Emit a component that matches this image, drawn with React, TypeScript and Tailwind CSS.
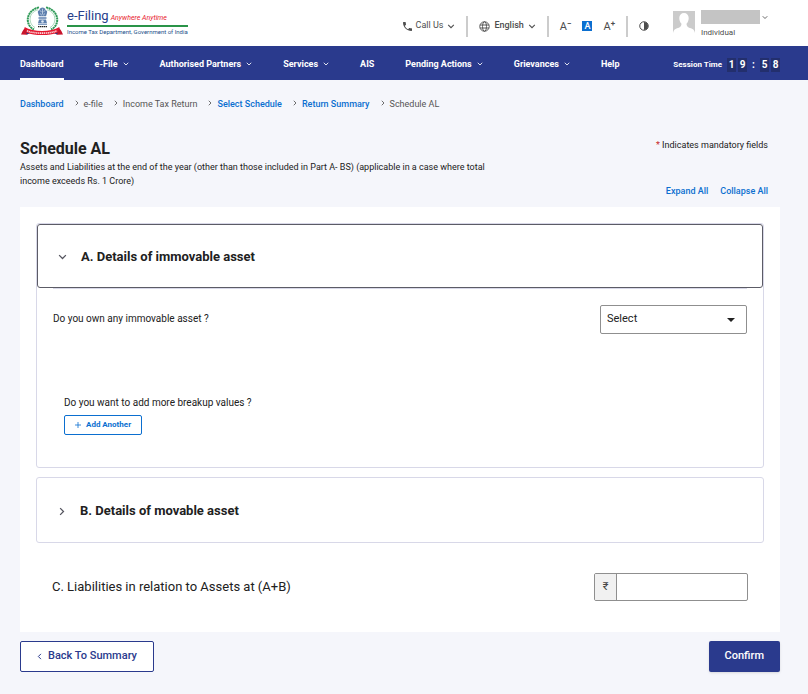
import { useState } from "react";
import type { ReactNode } from "react";

const navItems = [
    { label: "Dashboard", active: true },
    { label: "e-File", menu: true },
    { label: "Authorised Partners", menu: true },
    { label: "Services", menu: true },
    { label: "AIS" },
    { label: "Pending Actions", menu: true },
    { label: "Grievances", menu: true },
    { label: "Help" },
];

const crumbs = [
    { label: "Dashboard", link: true },
    { label: "e-file" },
    { label: "Income Tax Return" },
    { label: "Select Schedule", link: true },
    { label: "Return Summary", link: true },
    { label: "Schedule AL" },
];

const session = ["1", "9", ":", "5", "8"];

function ChevronDown({ className = "" }: { className?: string }) {
    return (
        <svg viewBox="0 0 12 8" fill="none" className={className}>
            <path d="M1.5 1.5L6 6l4.5-4.5" stroke="currentColor" strokeWidth="1.700" />
        </svg>
    );
}

function ChevronRight({ className = "" }: { className?: string }) {
    return (
        <svg viewBox="0 0 8 12" fill="none" className={className}>
            <path d="M1.5 1.5L6 6l-4.5 4.5" stroke="currentColor" strokeWidth="1.700" />
        </svg>
    );
}

function Emblem() {
    return (
        <svg viewBox="0 0 42 32" preserveAspectRatio="none" className="mt-[2px] h-[30px] w-[42px]" fill="none">
            {/* Laurel */}
            <path d="M18 1.500C4 5 4 21 13 25" stroke="#2f9a57" strokeWidth="2" strokeDasharray="2.200 .5" />
            <path d="M25 1.500c14 3.500 14 19.500 5 23.500" stroke="#2f9a57" strokeWidth="2" strokeDasharray="2.200 .5" />
            <path d="M17 4C7 7 7 19 14 23M26 4c10 3 10 15 3 19" stroke="#8cc9a0" strokeWidth=".8" />
            {/* Lion capital */}
            <path d="M18.500 4.500c0-2 1.500-3 3-3s3 1 3 3c1.600.3 2 1.500 1.500 3l-1 3.500h-7l-1-3.500c-.5-1.500 0-2.700 1.500-3z" fill="#5d7fae" />
            <path d="M19 5l1.500 1M24 5l-1.500 1M21.500 3v6M19.500 8l1 2M23.500 8l-1 2" stroke="#e3ebf5" strokeWidth=".7" />
            <path d="M17.500 12h8v1.500h-8zM18 14.500h7l1 4h-9z" fill="#5d7fae" />
            <circle cx="21.500" cy="16.500" r="1.300" fill="#dfe8f3" />
            <path d="M17 19.500h9" stroke="#5d7fae" strokeWidth="1" />
            <path d="M17 22h9" stroke="#222" strokeWidth="1.300" strokeDasharray="1.400 .5" />
            {/* Ribbon */}
            <path d="M4 23l-2.500 4L0 30.500l6 .2 2-3zM38 23l2.500 4 1.500 3.500-6 .2-2-3z" fill="#c9142c" />
            <path d="M5 27.500l4 1.500-3 1.500zM37 27.500l-4 1.500 3 1.500z" fill="#1f3f86" />
            <path d="M3.500 22.500c9 5.500 26 5.500 35 0l-2 6c-8 3.300-23 3.300-31 0z" fill="#e3182f" />
            <path d="M6 26.500c8 3.300 22 3.300 30 0" stroke="#fbd9dd" strokeWidth="1.700" strokeDasharray="1.300 .6" />
        </svg>
    );
}

function Logo() {
    return (
        <a href="#" className="flex items-start gap-1">
            <Emblem />
            <span className="flex flex-col pt-[5px] whitespace-nowrap">
                <span className="flex items-baseline gap-[2px] border-b-2 border-[#2a9448] leading-[14px]">
                    <span className="text-[13px] text-[#27408b]">e-Filing</span>
                    <span className="text-[7px] italic text-[#e8192c]">Anywhere Anytime</span>
                </span>
                <span className="text-[6px] leading-[10px] text-[#1d4f8a]">
                    Income Tax Department, Government of India
                </span>
            </span>
        </a>
    );
}

function Divider() {
    return <span className="h-[21px] w-[2px] bg-[#cccccc]" />;
}

function TopBar() {
    return (
        <header className="flex h-[46px] items-start justify-between bg-white pt-1 pr-10 pl-[21px] text-[#4d4d4d]">
            <Logo />
            <div className="flex items-start">
                <div className="flex h-11 items-center gap-[11px] text-[9px]">
                    <button type="button" className="flex items-center gap-1">
                        <svg viewBox="3 3 18 18" className="size-[9px]" fill="currentColor">
                            <path d="M20 15.500c-1.250 0-2.450-.2-3.570-.57-.35-.11-.74-.03-1.020.24l-2.200 2.200c-2.830-1.440-5.150-3.750-6.590-6.590l2.200-2.200c.28-.26.36-.65.25-1C8.700 6.450 8.500 5.250 8.500 4c0-.55-.45-1-1-1H4c-.55 0-1 .45-1 1 0 9.390 7.610 17 17 17 .55 0 1-.45 1-1v-3.500c0-.55-.45-1-1-1z" />
                        </svg>
                        Call Us
                        <ChevronDown className="h-[5px] w-2" />
                    </button>
                    <Divider />
                    <button type="button" className="flex items-center gap-1 font-medium">
                        <svg viewBox="0 0 22 22" className="size-[11px]" fill="none" stroke="currentColor" strokeWidth="1.800">
                            <circle cx="11" cy="11" r="9.500" />
                            <ellipse cx="11" cy="11" rx="4" ry="9.500" />
                            <path d="M2 8h18M2 14h18" />
                        </svg>
                        English
                        <ChevronDown className="h-[5px] w-2" />
                    </button>
                    <Divider />
                    <button type="button" aria-label="Decrease text size" className="flex items-start text-[11px] leading-none">
                        A<span className="text-[8px] leading-[5px] font-bold">−</span>
                    </button>
                    <button
                        type="button"
                        aria-label="Normal text size"
                        className="flex size-[10px] items-center justify-center bg-[#0b6fd0] text-[9px] leading-none font-medium text-white"
                    >
                        A
                    </button>
                    <button type="button" aria-label="Increase text size" className="flex items-start text-[11px] leading-none">
                        A<span className="text-[8px] leading-[6px] font-bold">+</span>
                    </button>
                    <Divider />
                    <button type="button" aria-label="Contrast">
                        <svg viewBox="0 0 20 20" className="size-[10px]">
                            <circle cx="10" cy="10" r="8.500" fill="none" stroke="currentColor" strokeWidth="2" />
                            <path d="M10 2a8 8 0 0 1 0 16z" fill="currentColor" />
                        </svg>
                    </button>
                </div>
                <svg viewBox="0 0 22 22" className="mt-[7px] ml-6 size-[22px]">
                    <path d="M0 0h22v22H0z" fill="#cbcbcb" />
                    <path d="M11 2c2.800 0 4.700 2 4.700 5 0 2.500-.9 4.500-2.200 5.800.2 3 1.500 3.700 4.500 4.500 2.200.7 3.500 2 4 4.700H0c.5-2.700 1.800-4 4-4.700 3-.8 4.300-1.500 4.500-4.500C7.200 11.500 6.300 9.500 6.300 7c0-3 1.900-5 4.700-5z" fill="#fff" />
                </svg>
                <button type="button" aria-label="Account" className="mt-[6px] ml-[6px] text-left text-[8px] leading-[10px]">
                    <span className="flex items-center gap-[2px]">
                        <span className="h-[14px] w-[59px] bg-[#c4c4c4]" />
                        <ChevronDown className="h-[5px] w-[6px]" />
                    </span>
                    <span className="mt-1 block">Individual</span>
                </button>
            </div>
        </header>
    );
}

function NavBar() {
    return (
        <nav className="flex h-[34px] items-stretch justify-between bg-[#2a3a8d] pr-7 pl-5 text-[9px] font-bold whitespace-nowrap text-white">
            <div className="flex gap-[31px]">
                {navItems.map((item) => (
                    <a
                        key={item.label}
                        href="#"
                        className={`flex items-center gap-[5px] border-b-2 pt-[5px] ${item.active ? "border-white" : "border-transparent"}`}
                    >
                        {item.label}
                        {item.menu && <ChevronDown className="mb-[2px] h-1 w-[6px]" />}
                    </a>
                ))}
            </div>
            <div className="flex items-center gap-[5px] pt-1">
                <span className="text-[8px]">Session Time</span>
                <span className="flex gap-[2px] text-[10px] leading-[14px]">
                    {session.map((ch, i) => (
                        <span key={i} className={`w-[9px] text-center ${ch === ":" ? "" : "bg-[#232f6d]"}`}>
                            {ch}
                        </span>
                    ))}
                </span>
            </div>
        </nav>
    );
}

function Breadcrumb() {
    return (
        <ol className="flex items-center text-[9px] leading-3">
            {crumbs.map((crumb, i) => (
                <li key={crumb.label} className="flex items-center">
                    {i > 0 && <ChevronRight className="mr-[5px] mb-[2px] ml-[11px] h-[6px] w-1 text-[#555555]" />}
                    {crumb.link ? (
                        <a href="#" className="font-medium text-[#0b6fd0]">{crumb.label}</a>
                    ) : (
                        <span className="text-[#555555]">{crumb.label}</span>
                    )}
                </li>
            ))}
        </ol>
    );
}

type PanelProps = {
    title: string;
    open: boolean;
    onToggle: () => void;
    children?: ReactNode;
};

function Panel({ title, open, onToggle, children }: PanelProps) {
    return (
        <section className="rounded-[3px] border border-[#d8d8e8]">
            <button
                type="button"
                aria-expanded={open}
                onClick={onToggle}
                className={`flex h-16 w-full items-center gap-[14px] rounded-[3px] px-5 pt-[2px] text-left text-[13px] font-bold ${open ? "border border-[#5c5c66]" : ""}`}
            >
                <span className="flex w-[9px] justify-center text-[#55555f]">
                    {open ? <ChevronDown className="h-[6px] w-[9px]" /> : <ChevronRight className="h-[9px] w-[6px]" />}
                </span>
                {title}
            </button>
            {open && <div className="mx-4 border-t border-[#d8d8e8]">{children}</div>}
        </section>
    );
}

export default function App() {
    const [openA, setOpenA] = useState(true);
    const [openB, setOpenB] = useState(false);

    const setAll = (value: boolean) => {
        setOpenA(value);
        setOpenB(value);
    };

    return (
        <div className="min-h-screen bg-[#f5f6fb] font-[Roboto,sans-serif] text-[#212121]">
            <TopBar />
            <NavBar />

            <main className="pt-[18px] pr-7 pb-[22px] pl-5">
                <Breadcrumb />

                {/* Page heading */}
                <div className="mt-7 flex items-start justify-between">
                    <div className="max-w-[490px]">
                        <h1 className="text-[16px] leading-[22px] font-bold">Schedule AL</h1>
                        <p className="text-[9px] leading-[14px]">
                            Assets and Liabilities at the end of the year (other than those included in Part A- BS) (applicable in a
                            case where total income exceeds Rs. 1 Crore)
                        </p>
                    </div>
                    <div className="flex flex-col items-end gap-8 pr-3 text-[9px] leading-[14px]">
                        <p>
                            <span className="text-[#c62828]">*</span> Indicates mandatory fields
                        </p>
                        <div className="flex gap-3 font-medium text-[#0b6fd0]">
                            <button type="button" onClick={() => setAll(true)}>Expand All</button>
                            <button type="button" onClick={() => setAll(false)}>Collapse All</button>
                        </div>
                    </div>
                </div>

                <div className="mt-[9px] bg-white px-4 pt-4 pb-[31px]">
                    <Panel title="A. Details of immovable asset" open={openA} onToggle={() => setOpenA(!openA)}>
                        <div className="flex items-start justify-between pt-4">
                            <label htmlFor="own-asset" className="pt-2 text-[10px] leading-3">
                                Do you own any immovable asset ?
                            </label>
                            <div className="relative w-[147px]">
                                <select
                                    id="own-asset"
                                    className="h-[29px] w-full appearance-none rounded-[2px] border border-[#8f8f8f] bg-white px-[6px] text-[11px]"
                                >
                                    <option>Select</option>
                                    <option>Yes</option>
                                    <option>No</option>
                                </select>
                                <svg viewBox="0 0 8 4" className="pointer-events-none absolute top-[13px] right-3 h-1 w-2">
                                    <path d="M0 0h8L4 4z" fill="#212121" />
                                </svg>
                            </div>
                        </div>
                        <div className="mt-[62px] ml-[11px] pb-8">
                            <p className="text-[10px] leading-[14px]">Do you want to add more breakup values ?</p>
                            <button
                                type="button"
                                className="mt-[5px] flex h-5 items-center gap-[5px] rounded-[2px] border border-[#0b6fd0] px-[10px] text-[8px] font-bold text-[#0b6fd0]"
                            >
                                <svg viewBox="0 0 6 6" className="size-[6px]">
                                    <path d="M3 0v6M0 3h6" stroke="currentColor" strokeWidth=".8" />
                                </svg>
                                Add Another
                            </button>
                        </div>
                    </Panel>

                    <div className="mt-[9px]">
                        <Panel title="B. Details of movable asset" open={openB} onToggle={() => setOpenB(!openB)} />
                    </div>

                    <div className="mt-[30px] flex items-center justify-between px-4">
                        <label htmlFor="liabilities" className="text-[13px]">
                            C. Liabilities in relation to Assets at (A+B)
                        </label>
                        <div className="flex h-7 w-[154px] overflow-hidden rounded-[2px] border border-[#8f8f8f]">
                            <span className="flex w-[22px] items-center justify-center border-r border-[#8f8f8f] bg-[#f1f1f1] text-[11px] text-[#444444]">
                                ₹
                            </span>
                            <input id="liabilities" type="text" className="min-w-0 flex-1 px-2 text-[11px] outline-none" />
                        </div>
                    </div>
                </div>

                {/* Footer actions */}
                <div className="mt-[9px] flex justify-between text-[11px] font-medium">
                    <button
                        type="button"
                        className="flex h-[31px] items-center gap-[6px] rounded-[2px] border border-[#2a3a8d] bg-white px-4 text-[#2a3a8d]"
                    >
                        <ChevronRight className="h-[7px] w-[5px] rotate-180" />
                        Back To Summary
                    </button>
                    <button type="button" className="h-[31px] rounded-[2px] bg-[#2a3a8d] px-4 text-white shadow">
                        Confirm
                    </button>
                </div>
            </main>
        </div>
    );
}
